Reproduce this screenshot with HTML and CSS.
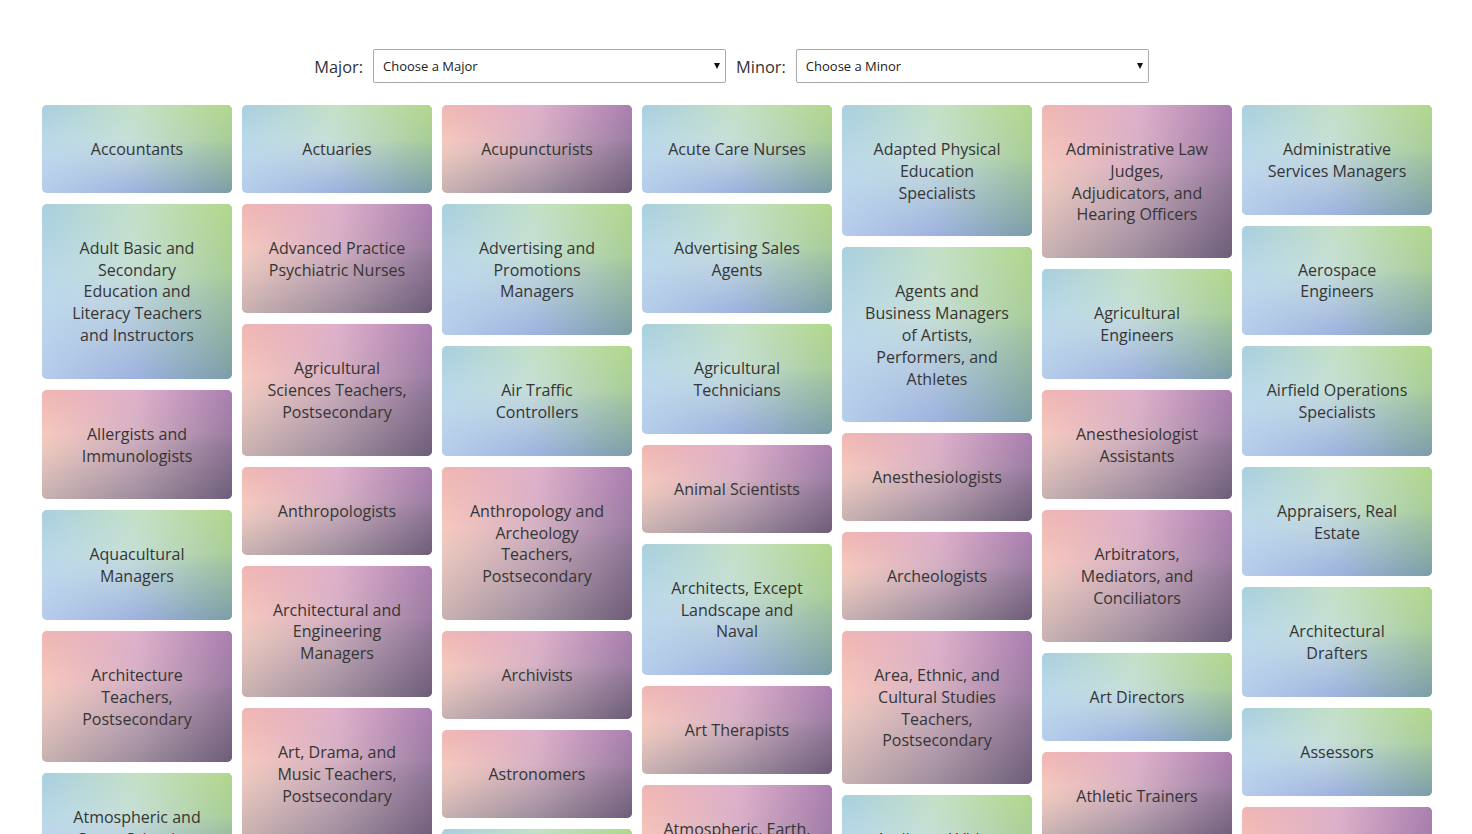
FILE: index.html
```html
<!DOCTYPE html>
<html lang="en">
<head>
<meta charset="utf-8">
<title>Careers</title>
<link rel="stylesheet" href="styles.css">
</head>
<body>
<div class="toolbar">
  <label class="lbl" for="major">Major:</label>
  <div class="select-wrap"><select id="major" class="sel"><option>Choose a Major</option></select></div>
  <label class="lbl lbl-minor" for="minor">Minor:</label>
  <div class="select-wrap"><select id="minor" class="sel"><option>Choose a Minor</option></select></div>
</div>
<div class="grid">
  <div class="col">
    <div class="card b"><span>Accountants</span></div>
    <div class="card b"><span>Adult Basic and Secondary Education and Literacy Teachers and Instructors</span></div>
    <div class="card p"><span>Allergists and Immunologists</span></div>
    <div class="card b"><span>Aquacultural Managers</span></div>
    <div class="card p"><span>Architecture Teachers, Postsecondary</span></div>
    <div class="card b"><span>Atmospheric and Space Scientists</span></div>
  </div>
  <div class="col">
    <div class="card b"><span>Actuaries</span></div>
    <div class="card p"><span>Advanced Practice Psychiatric Nurses</span></div>
    <div class="card p"><span>Agricultural Sciences Teachers, Postsecondary</span></div>
    <div class="card p"><span>Anthropologists</span></div>
    <div class="card p"><span>Architectural and Engineering Managers</span></div>
    <div class="card p"><span>Art, Drama, and Music Teachers, Postsecondary</span></div>
  </div>
  <div class="col">
    <div class="card p"><span>Acupuncturists</span></div>
    <div class="card b"><span>Advertising and Promotions Managers</span></div>
    <div class="card b"><span>Air Traffic Controllers</span></div>
    <div class="card p"><span>Anthropology and Archeology Teachers, Postsecondary</span></div>
    <div class="card p"><span>Archivists</span></div>
    <div class="card p"><span>Astronomers</span></div>
    <div class="card b"><span>Audiologists</span></div>
  </div>
  <div class="col">
    <div class="card b"><span>Acute Care Nurses</span></div>
    <div class="card b"><span>Advertising Sales Agents</span></div>
    <div class="card b"><span>Agricultural Technicians</span></div>
    <div class="card p"><span>Animal Scientists</span></div>
    <div class="card b"><span>Architects, Except Landscape and Naval</span></div>
    <div class="card p"><span>Art Therapists</span></div>
    <div class="card p"><span>Atmospheric, Earth, Marine, and Space Sciences Teachers, Postsecondary</span></div>
  </div>
  <div class="col">
    <div class="card b"><span>Adapted Physical Education Specialists</span></div>
    <div class="card b"><span>Agents and Business Managers of Artists, Performers, and Athletes</span></div>
    <div class="card p"><span>Anesthesiologists</span></div>
    <div class="card p"><span>Archeologists</span></div>
    <div class="card p"><span>Area, Ethnic, and Cultural Studies Teachers, Postsecondary</span></div>
    <div class="card b"><span>Audio and Video Technicians</span></div>
  </div>
  <div class="col">
    <div class="card p"><span>Administrative Law Judges, Adjudicators, and Hearing Officers</span></div>
    <div class="card b"><span>Agricultural Engineers</span></div>
    <div class="card p"><span>Anesthesiologist Assistants</span></div>
    <div class="card p"><span>Arbitrators, Mediators, and Conciliators</span></div>
    <div class="card b"><span>Art Directors</span></div>
    <div class="card p"><span>Athletic Trainers</span></div>
  </div>
  <div class="col">
    <div class="card b"><span>Administrative Services Managers</span></div>
    <div class="card b"><span>Aerospace Engineers</span></div>
    <div class="card b"><span>Airfield Operations Specialists</span></div>
    <div class="card b"><span>Appraisers, Real Estate</span></div>
    <div class="card b"><span>Architectural Drafters</span></div>
    <div class="card b"><span>Assessors</span></div>
    <div class="card p"><span>Audio-Visual and Multimedia Collections Specialists</span></div>
  </div>
</div>
</body>
</html>
```
FILE: styles.css
```css
html, body {
  margin: 0;
  padding: 0;
  background: #fff;
}
body {
  font-family: "Open Sans", "Noto Sans", sans-serif;
  color: #333;
}
.toolbar {
  display: flex;
  justify-content: center;
  align-items: center;
  padding-top: 49px;
  padding-right: 9px;
  height: 34px;
}
.lbl {
  font-size: 16.4px;
  color: #333;
  margin-right: 10px;
}
.lbl-minor {
  margin-left: 10px;
}
.select-wrap {
  position: relative;
}
.select-wrap::after {
  content: "";
  position: absolute;
  right: 6px;
  top: 14px;
  border-left: 3.5px solid transparent;
  border-right: 3.5px solid transparent;
  border-top: 6px solid #111;
  pointer-events: none;
}
.sel {
  -webkit-appearance: none;
  appearance: none;
  width: 353px;
  height: 34px;
  box-sizing: border-box;
  border: 1px solid #aaa;
  border-radius: 2px;
  background: #fff;
  font-family: "Open Sans", "Noto Sans", sans-serif;
  font-size: 13px;
  color: #222;
  padding: 0 20px 0 9px;
  margin: 0;
}
.grid {
  width: 1390px;
  margin: 22px auto 0;
  padding-left: 2px;
  display: flex;
  gap: 10px;
  align-items: flex-start;
}
.col {
  width: 190px;
  display: flex;
  flex-direction: column;
  gap: 11px;
}
.card {
  position: relative;
  overflow: hidden;
  border-radius: 5px;
  padding: 34px 20px 32px;
  text-align: center;
  font-size: 16px;
  line-height: 21.8px;
  color: #353535;
}
.card span {
  position: relative;
  z-index: 1;
}
.card::before,
.card::after {
  content: "";
  position: absolute;
  left: 0;
  right: 0;
  top: 0;
  bottom: 0;
}
.card::before {
  -webkit-mask-image: linear-gradient(to bottom, #000 0%, rgba(0,0,0,0) 55%);
  mask-image: linear-gradient(to bottom, #000 0%, rgba(0,0,0,0) 55%);
}
.card::after {
  -webkit-mask-image: linear-gradient(to top, #000 0%, rgba(0,0,0,0) 60%);
  mask-image: linear-gradient(to top, #000 0%, rgba(0,0,0,0) 60%);
}
/* blue / green */
.card.b {
  background: linear-gradient(to right, #c0dcee 0%, #c9e0df 45%, #a6c99c 100%);
}
.card.b::before {
  background: linear-gradient(to right, #a8cfde 0%, #c4e0c6 50%, #b1d78b 100%);
}
.card.b::after {
  background: linear-gradient(to right, #b6ccea 0%, #9db1df 50%, #7a9da6 100%);
}
/* pink / purple */
.card.p {
  background: linear-gradient(to right, #f9d0c3 0%, #d4b3c2 48%, #967b9e 100%);
}
.card.p::before {
  background: linear-gradient(to right, #f0b5b2 0%, #dfb0cb 50%, #ab7fb1 100%);
}
.card.p::after {
  background: linear-gradient(to right, #c7b1b1 0%, #9d8d9d 50%, #6d5d78 100%);
}
```
